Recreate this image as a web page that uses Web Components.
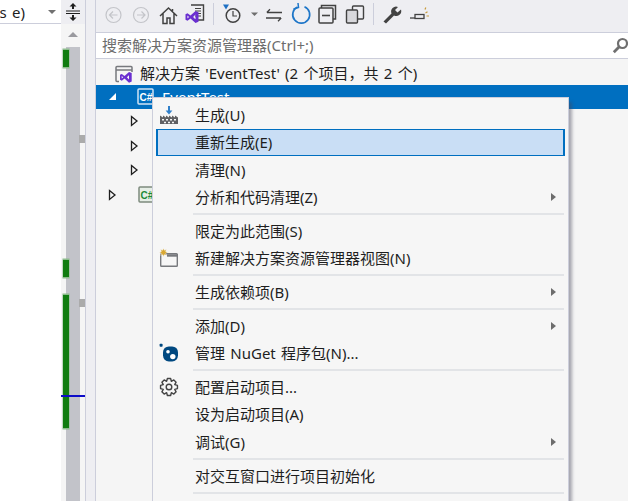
<!DOCTYPE html>
<html lang="zh">
<head>
<meta charset="utf-8">
<style>
	html, body { margin: 0; height: 100%; overflow: hidden; background: #f5f5f5; }
	body { font-family: "Noto Sans", "Noto Sans CJK SC", sans-serif; font-size: 15px; color: #1e1e1e; word-spacing: 1.4px; }
</style>
</head>
<body>
<vs-window>
	<vs-editor-edge slot="edge"></vs-editor-edge>
	<vs-explorer slot="main">
		<vs-toolbar></vs-toolbar>
		<vs-search placeholder="搜索解决方案资源管理器(Ctrl+;)"></vs-search>
		<vs-tree></vs-tree>
		<vs-context-menu></vs-context-menu>
	</vs-explorer>
</vs-window>

<script>
const VS_GLYPH = "M0 4.2 2 3.2 5 5.6 10 1 13 2.2V11.8L10 13 5 8.4 2 10.8 0 9.8ZM10 4.6 7.6 7 10 9.4ZM1.9 5.6V8.4L3.6 7Z";

function gearPath(cx, cy, outer, inner, teeth) {
	let d = "";
	const step = (Math.PI * 2) / teeth;
	for (let i = 0; i < teeth; i++) {
		const a = i * step;
		const pts = [
			[inner, a - step * 0.5],
			[outer, a - step * 0.24],
			[outer, a + step * 0.24],
			[inner, a + step * 0.5],
		];
		pts.forEach(([r, t], j) => {
			const x = (cx + r * Math.cos(t)).toFixed(2);
			const y = (cy + r * Math.sin(t)).toFixed(2);
			d += (i === 0 && j === 0 ? "M" : "L") + x + " " + y;
		});
	}
	return d + "Z";
}

const ICONS = {
	build: `<svg width="20" height="20" viewBox="0 0 20 20">
		<path d="M1 19V10.5L4 12.5V10.5L7 12.5V10.5L10 12.5V10.5L13 12.5V10.5L16 12.5V10.5L19 12.5V19Z" fill="#5f6063"/>
		<path d="M3 14h2v1.6H3zM7 14h2v1.6H7zM11 14h2v1.6h-2zM15 14h2v1.6h-2zM5 16.8h2v1.4H5zM9 16.8h2v1.4H9zM13 16.8h2v1.4h-2z" fill="#f6f6f6"/>
		<path d="M9 1h2v4.5h2.4L10 9.4 6.6 5.5H9Z" fill="#2f7fc9"/>
	</svg>`,
	newView: `<svg width="20" height="20" viewBox="0 0 20 20">
		<rect x="1.700" y="5.700" width="16.600" height="12.600" rx=".8" fill="#f6f6f6" stroke="#77797d" stroke-width="1.400"/>
		<path d="M8 7.500h11" stroke="#77797d" stroke-width="2.400"/>
		<path d="M4.500 .4l.9 1.900 2-.8-.8 2 1.900.9-1.900.9.8 2-2-.8-.9 1.900-.9-1.900-2 .8.8-2L.5 4.400l1.900-.9-.8-2 2 .8Z" fill="#d9a832" stroke="#f6f6f6" stroke-width=".4"/>
	</svg>`,
	nuget: `<svg width="20" height="20" viewBox="0 0 20 20">
		<rect x="0.6" y="0.8" width="3" height="3" rx=".8" fill="#004880"/>
		<rect x="4" y="3.400" width="15" height="15" rx="5.800" fill="#004880"/>
		<circle cx="9" cy="8.800" r="1.800" fill="#fff"/>
		<circle cx="13.800" cy="13.600" r="2.700" fill="#fff"/>
	</svg>`,
	gear: `<svg width="20" height="20" viewBox="0 0 20 20">
		<path d="${gearPath(10, 10, 8.6, 6.2, 8)}" fill="none" stroke="#444" stroke-width="1.400" stroke-linejoin="round"/>
		<circle cx="10" cy="10" r="2.800" fill="none" stroke="#444" stroke-width="1.400"/>
	</svg>`,
	blank: `<svg width="20" height="20" viewBox="0 0 20 20"><path d="M5 8V3M9 8V3M13 8V3" stroke="#9a9a9a" stroke-width="1.500"/></svg>`,
};

class VsWindow extends HTMLElement {
	constructor() {
		super();
		this.attachShadow({ mode: "open" });
		this.shadowRoot.innerHTML = `
			<style>
				:host { display: flex; width: 628px; height: 501px; overflow: hidden; }
				.edge { flex: 0 0 96px; display: flex; }
				.main { flex: 1; display: flex; min-width: 0; }
			</style>
			<div class="edge"><slot name="edge"></slot></div>
			<div class="main"><slot name="main"></slot></div>
		`;
	}
}

// left part: editor tail, vertical scrollbar with markers, splitter strip
class VsEditorEdge extends HTMLElement {
	constructor() {
		super();
		this.attachShadow({ mode: "open" });
		this.shadowRoot.innerHTML = `
			<style>
				:host { display: flex; width: 96px; height: 501px; background: #eeeef2; }
				.code { width: 61px; display: flex; flex-direction: column; background: #fff; }
				.combo { height: 23px; border-bottom: 1px solid #cccedb; display: flex; align-items: center; justify-content: flex-end; gap: 23px; padding-right: 5px; font-size: 15px; color: #1e1e1e; overflow: hidden; }
				.combo span { white-space: nowrap; margin-top: 1px; }
				.combo i { width: 0; height: 0; border: 4px solid transparent; border-top: 4px solid #717171; border-bottom: 0; }
				.bar { width: 24px; display: flex; flex-direction: column; }
				.split { height: 24px; display: flex; align-items: center; justify-content: center; background: #eeeef2; }
				.scroll { flex: 1; position: relative; background: #f5f5f5; }
				.up { position: absolute; left: 7px; top: 8px; width: 0; height: 0; border: 5px solid transparent; border-bottom: 5px solid #9a9a9f; border-top: 0; }
				.track { position: absolute; left: 5px; right: 5px; top: 23px; bottom: 0; background: #c2c3c9; }
				.mark { position: absolute; left: 1.500px; width: 6px; background: #107c10; border: 1px solid #8cbc8c; border-width: 1px 0; box-shadow: 0 0 0 .5px #8cbc8c; }
				.tick { position: absolute; left: 17.500px; width: 6px; height: 8px; background: #ababab; }
				.line { position: absolute; left: 0; width: 24px; top: 370.500px; height: 2px; background: #0c0cc8; }
				.gap { width: 10px; border-left: 1px solid #cccedb; border-right: 1px solid #cccedb; margin-left: 0; flex: 1; }
			</style>
			<div class="code">
				<div class="combo"><span>gs e)</span><i></i></div>
			</div>
			<div class="bar">
				<div class="split">
					<svg width="16" height="18" viewBox="0 0 16 18">
						<path d="M8 0 11.500 3.500H9V6H7V3.500H4.500ZM8 18 4.500 14.500H7V12H9V14.500H11.500Z" fill="#1e1e1e"/>
						<path d="M1 8h14M1 10.500h14" stroke="#1e1e1e"/>
					</svg>
				</div>
				<div class="scroll">
					<div class="up"></div>
					<div class="track"></div>
					<div class="mark" style="top:25px;height:17px"></div>
					<div class="mark" style="top:235px;height:17px"></div>
					<div class="mark" style="top:270px;height:133px"></div>
					<div class="tick" style="top:111px"></div>
					<div class="tick" style="top:275px"></div>
					<div class="line"></div>
				</div>
			</div>
			<div class="gap"></div>
		`;
	}
}

class VsExplorer extends HTMLElement {
	constructor() {
		super();
		this.attachShadow({ mode: "open" });
		this.shadowRoot.innerHTML = `
			<style>
				:host { display: flex; flex-direction: column; position: relative; width: 532px; height: 501px; background: #f5f5f5; }
			</style>
			<slot></slot>
		`;
	}
}

class VsToolbar extends HTMLElement {
	constructor() {
		super();
		this.attachShadow({ mode: "open" });
		this.shadowRoot.innerHTML = `
			<style>
				:host { display: block; height: 32px; background: #eeeef2; }
				svg { display: block; }
			</style>
			<svg width="532" height="32" viewBox="96 0 532 32" fill="none">
				<g stroke="#c3c4c9" stroke-width="1.200">
					<circle cx="113.500" cy="15" r="7.500"/><path d="M117.500 15h-7.500M113 11.500 109.500 15l3.500 3.500"/>
					<circle cx="141" cy="15" r="7.500"/><path d="M137 15h7.500M141.500 11.500 145 15l-3.500 3.500"/>
				</g>
				<path d="M160 16 168.500 8 177 16M163 13.500V23.500H167V18H170V23.500H174V13.500M172.500 9V12" stroke="#424242" stroke-width="1.500"/>
				<path d="M191 5h12.500v15H193" stroke="#424242" stroke-width="1.400"/>
				<path d="M195 8.500h6M195 11h6M195 13.500h6M195 16h6" stroke="#424242"/>
				<g transform="translate(185.500,10)"><path d="${VS_GLYPH}" fill="#6a2fd0" fill-rule="evenodd"/></g>
				<path d="M213.500 3v22" stroke="#cccedb"/>
				<path d="M223 4.500h6l-3 5Z" fill="#1e70c4"/>
				<circle cx="233" cy="15.500" r="6.800" stroke="#424242" stroke-width="1.500"/>
				<path d="M233 11v5h4" stroke="#424242" stroke-width="1.200"/>
				<path d="M251 12.500h7l-3.500 3.500Z" fill="#6e6e6e"/>
				<path d="M267 12.500h15M270 9.300 266.800 12.500M266 18h15M278 21.200 281.200 18" stroke="#424242" stroke-width="1.300"/>
				<path d="M297.500 7A8.500 8.500 0 1 0 304.500 6.800" stroke="#1e76c8" stroke-width="1.700"/>
				<path d="M298 3 298.500 7.500 293.500 9" stroke="#1e76c8" stroke-width="1.500"/>
				<path d="M321.500 8V5.500H335.500V19H333" stroke="#424242" stroke-width="1.500"/>
				<rect x="319" y="8" width="14" height="15" rx="1" fill="#eeeef2" stroke="#424242" stroke-width="1.500"/>
				<path d="M322 15.500h8" stroke="#424242" stroke-width="1.600"/>
				<rect x="352.500" y="6" width="11" height="13" rx="1" fill="#eeeef2" stroke="#424242" stroke-width="1.400"/>
				<rect x="346.500" y="10" width="11" height="13" rx="1" fill="#d8d8dc" stroke="#424242" stroke-width="1.400"/>
				<path d="M373.500 3v22" stroke="#cccedb"/>
				<path d="M383.500 21.500 391.500 13.500A5 5 0 0 1 398 7L395 10 397.500 12.500 401 9.500A5 5 0 0 1 394 15.500L386 23.500Z" fill="#424242"/>
				<rect x="415" y="14.500" width="9" height="4" fill="#eeeef2" stroke="#424242" stroke-width="1.300"/>
				<path d="M410 18h5" stroke="#424242" stroke-width="1.300"/>
				<path d="M425.500 13l2-1.200M426.500 16h2.500M425 9.500l.8-2" stroke="#c89b3c" stroke-width="1.200"/>
			</svg>
		`;
	}
}

class VsSearch extends HTMLElement {
	constructor() {
		super();
		this.attachShadow({ mode: "open" });
		this.shadowRoot.innerHTML = `
			<style>
				:host { display: flex; align-items: center; justify-content: space-between; box-sizing: border-box; height: 27px; margin-top: 0; background: #fff; border: 1px solid #cccedb; border-width: 1px 0; padding-left: 6px; color: #6d6d6d; font-size: 15px; white-space: nowrap; overflow: hidden; }
				span { margin-top: -3px; }
				svg { margin-right: -1px; flex: none; }
			</style>
			<span>${this.getAttribute("placeholder")}</span>
			<svg width="17" height="17" viewBox="0 0 17 17" fill="none">
				<circle cx="10.500" cy="6.500" r="4.500" stroke="#6f6f6f" stroke-width="2.200"/>
				<path d="M7 10 1.800 15.200" stroke="#6f6f6f" stroke-width="2.800"/>
			</svg>
		`;
	}
}

class VsTreeRow extends HTMLElement {
	constructor() {
		super();
		this.attachShadow({ mode: "open" });
		const depth = Number(this.getAttribute("depth") || 0);
		const arrow = this.getAttribute("arrow");
		const arrowSvg = {
			open: `<path d="M9 2V9H2Z" fill="#fff"/>`,
			closed: `<path d="M2.500 1.500 8 6 2.500 10.500Z" fill="#f5f5f5" stroke="#1e1e1e" stroke-width="1.300"/>`,
		};
		this.shadowRoot.innerHTML = `
			<style>
				:host { display: flex; align-items: center; height: 24.500px; padding-left: ${depth}px; white-space: nowrap; overflow: hidden; }
				:host([selected]) { background: #006fc0; color: #fff; }
				.arrow { width: 12px; height: 12px; flex: none; margin-right: 6px; }
				.icon { display: flex; flex: none; margin-right: 8px; }
			</style>
			${arrow ? `<svg class="arrow" viewBox="0 0 12 12">${arrowSvg[arrow]}</svg>` : ""}
			<div class="icon"><slot name="icon"></slot></div>
			<span><slot></slot></span>
		`;
	}
}

class VsTree extends HTMLElement {
	constructor() {
		super();
		this.attachShadow({ mode: "open" });
		const csIcon = (stroke, fill, color) => `<svg slot="icon" width="17" height="17" viewBox="0 0 17 17">
			<rect x="1" y="1" width="15" height="15" rx="1" fill="${fill}" stroke="${stroke}" stroke-width="1.500"/>
			<text x="2.500" y="13" font-family="Liberation Sans" font-weight="700" font-size="10" fill="${color}">C#</text>
		</svg>`;
		this.shadowRoot.innerHTML = `
			<style>
				:host { display: flex; flex-direction: column; padding-top: 1px; }
				svg { display: block; }
			</style>
			<vs-tree-row depth="19">
				<svg slot="icon" style="margin:3px -1px 0 0" width="18" height="18" viewBox="0 0 18 18" fill="none">
					<rect x="1" y="1.500" width="16" height="15" rx="1" stroke="#77797d" stroke-width="1.500"/>
					<path d="M1 5h16" stroke="#77797d" stroke-width="1.500"/>
					<rect x="4" y="7" width="14" height="11" fill="#f5f5f5"/>
					<g transform="translate(5,6) scale(.9)"><path d="${VS_GLYPH}" fill="#6a2fd0" fill-rule="evenodd"/></g>
				</svg>
				解决方案 'EventTest' (2 个项目，共 2 个)
			</vs-tree-row>
			<vs-tree-row depth="11" arrow="open" selected>
				<span slot="icon" style="margin-left:12px">${csIcon("#cfe3f4", "#006fc0", "#fff")}</span>
				EventTest
			</vs-tree-row>
			<vs-tree-row depth="33" arrow="closed"></vs-tree-row>
			<vs-tree-row depth="33" arrow="closed"></vs-tree-row>
			<vs-tree-row depth="33" arrow="closed"></vs-tree-row>
			<vs-tree-row depth="11" arrow="closed">
				<span slot="icon" style="margin-left:13px">${csIcon("#7d8a7d", "#e6eee6", "#1d8a3a")}</span>
			</vs-tree-row>
		`;
	}
}

class VsMenuItem extends HTMLElement {
	constructor() {
		super();
		this.attachShadow({ mode: "open" });
		const icon = ICONS[this.getAttribute("icon")] || "";
		const sub = this.hasAttribute("submenu");
		this.shadowRoot.innerHTML = `
			<style>
				:host { display: flex; align-items: center; box-sizing: border-box; height: 27.300px; padding-left: 2px; margin: 0 3px; border: 1px solid transparent; white-space: nowrap; }
				:host([active]) { background: #c9def5; border: 2px solid #006fc0; border-width: 1.500px 2px; padding-left: 1px; }
				.icon { width: 20px; height: 20px; flex: none; margin-right: 16px; display: flex; align-items: center; justify-content: center; }
				.icon svg { display: block; }
				.text { flex: 1; margin-top: -1px; }
				.sub { width: 0; height: 0; flex: none; margin-right: 8px; border: 4px solid transparent; border-left: 5px solid #6d6d6d; border-right: 0; }
			</style>
			<div class="icon">${icon}</div>
			<div class="text"><slot></slot></div>
			${sub ? `<i class="sub"></i>` : ""}
		`;
	}
}

class VsMenuSep extends HTMLElement {
	constructor() {
		super();
		this.attachShadow({ mode: "open" });
		this.shadowRoot.innerHTML = `
			<style>
				:host { display: flex; align-items: center; height: 6.600px; padding: 0 4px 0 40px; }
				div { flex: 1; height: 2px; background: #e2e4e7; }
			</style>
			<div></div>
		`;
	}
}

class VsContextMenu extends HTMLElement {
	constructor() {
		super();
		this.attachShadow({ mode: "open" });
		this.shadowRoot.innerHTML = `
			<style>
				:host { position: absolute; left: 56px; top: 97px; width: 417px; height: 420px; box-sizing: border-box; padding-top: 3.500px; background: #f6f6f6; border: 1px solid #cccedb; box-shadow: 4px 4px 3px -1px rgba(70, 70, 90, .45); overflow: hidden; }
			</style>
			<vs-menu-item icon="build">生成(U)</vs-menu-item>
			<vs-menu-item active>重新生成(E)</vs-menu-item>
			<vs-menu-item>清理(N)</vs-menu-item>
			<vs-menu-item submenu>分析和代码清理(Z)</vs-menu-item>
			<vs-menu-sep></vs-menu-sep>
			<vs-menu-item>限定为此范围(S)</vs-menu-item>
			<vs-menu-item icon="newView">新建解决方案资源管理器视图(N)</vs-menu-item>
			<vs-menu-sep></vs-menu-sep>
			<vs-menu-item submenu>生成依赖项(B)</vs-menu-item>
			<vs-menu-sep></vs-menu-sep>
			<vs-menu-item submenu>添加(D)</vs-menu-item>
			<vs-menu-item icon="nuget">管理 NuGet 程序包(N)...</vs-menu-item>
			<vs-menu-sep></vs-menu-sep>
			<vs-menu-item icon="gear">配置启动项目...</vs-menu-item>
			<vs-menu-item>设为启动项目(A)</vs-menu-item>
			<vs-menu-item submenu>调试(G)</vs-menu-item>
			<vs-menu-sep></vs-menu-sep>
			<vs-menu-item>对交互窗口进行项目初始化</vs-menu-item>
			<vs-menu-sep></vs-menu-sep>
			<vs-menu-item icon="blank"></vs-menu-item>
		`;
	}
}

customElements.define("vs-window", VsWindow);
customElements.define("vs-editor-edge", VsEditorEdge);
customElements.define("vs-explorer", VsExplorer);
customElements.define("vs-toolbar", VsToolbar);
customElements.define("vs-search", VsSearch);
customElements.define("vs-tree-row", VsTreeRow);
customElements.define("vs-tree", VsTree);
customElements.define("vs-menu-item", VsMenuItem);
customElements.define("vs-menu-sep", VsMenuSep);
customElements.define("vs-context-menu", VsContextMenu);
</script>
</body>
</html>
